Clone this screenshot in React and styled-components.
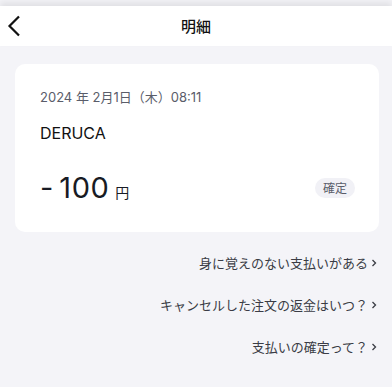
import React from 'react'
import styled, { createGlobalStyle } from 'styled-components'

const GlobalStyle = createGlobalStyle`
    html, body {
        margin: 0;
        padding: 0;
        background: #f4f4f8;
        font-family: Inter, "Noto Sans CJK JP", sans-serif;
        -webkit-font-smoothing: antialiased;
    }
`

const Page = styled.div`
    width: 392px;
    height: 387px;
    background: #f4f4f8;
    overflow: hidden;
`

const Header = styled.header`
    height: 40px;
    margin-top: 6px;
    background: #fff;
    box-shadow: 0 -4px 6px rgba(0, 0, 0, 0.08);
    display: grid;
    grid-template-columns: 60px 1fr 60px;
    align-items: center;
`

const BackButton = styled.button`
    border: none;
    background: none;
    padding: 0 0 0 7px;
    height: 100%;
    display: flex;
    align-items: center;
    cursor: pointer;
`

const Title = styled.h1`
    margin: 0 0 1px 0;
    text-align: center;
    font-size: 15px;
    font-weight: 500;
    color: #111;
    font-family: "Noto Sans CJK JP", sans-serif;
`

const Content = styled.main`
    padding: 18px 13px 0 15px;
`

const Card = styled.section`
    background: #fff;
    border-radius: 10px;
    height: 168px;
    box-sizing: border-box;
    padding: 24px 25px 0 25px;
`

const DateText = styled.div`
    font-size: 13px;
    color: #5a5d6a;
    line-height: 18px;
    font-family: Inter, "Noto Sans CJK JP", sans-serif;
`

const Merchant = styled.div`
    margin-top: 17px;
    font-size: 16px;
    color: #111;
    line-height: 20px;
`

const AmountRow = styled.div`
    margin-top: 27px;
    display: flex;
    align-items: center;
    justify-content: space-between;
`

const Amount = styled.div`
    display: flex;
    align-items: baseline;
    color: #181b24;
`

const Minus = styled.span`
    font-size: 29px;
    margin-right: 6px;
`

const Value = styled.span`
    font-size: 29px;
    font-weight: 400;
    letter-spacing: 0.5px;
`

const Yen = styled.span`
    margin-left: 6px;
    font-size: 14px;
    font-family: "Noto Sans CJK JP", sans-serif;
`

const Badge = styled.span`
    background: #f1f1f6;
    color: #5a5d6a;
    border-radius: 10px;
    font-size: 12px;
    line-height: 20px;
    padding: 0 8px;
    margin-right: -1px;
    font-family: "Noto Sans CJK JP", sans-serif;
`

const LinkList = styled.ul`
    list-style: none;
    margin: 0;
    padding: 22px 2px 0 0;
    display: flex;
    flex-direction: column;
    align-items: flex-end;
    gap: 24px;
`

const LinkItem = styled.li`
    font-size: 13px;
    line-height: 18px;
    color: #3a3c45;
    font-family: "Noto Sans CJK JP", sans-serif;
    display: flex;
    align-items: center;
    gap: 3px;
`

const Chevron = () => (
    <svg width="6" height="10" viewBox="0 0 6 10">
        <path d="M1.5 2 L4.5 5 L1.5 8" fill="none" stroke="#3a3c45" strokeWidth="1.3" />
    </svg>
)

const links = [
    '身に覚えのない支払いがある',
    'キャンセルした注文の返金はいつ？',
    '支払いの確定って？',
]

export default function App() {
    return (
        <Page>
            <GlobalStyle />
            <Header>
                <BackButton>
                    <svg width="14" height="22" viewBox="0 0 14 22">
                        <path d="M12 1.5 L2.5 11 L12 20.5" fill="none" stroke="#111" strokeWidth="2.2" />
                    </svg>
                </BackButton>
                <Title>明細</Title>
                <div />
            </Header>
            <Content>
                <Card>
                    <DateText>2024 年 2月1日（木）08:11</DateText>
                    <Merchant>DERUCA</Merchant>
                    <AmountRow>
                        <Amount>
                            <Minus>-</Minus>
                            <Value>100</Value>
                            <Yen>円</Yen>
                        </Amount>
                        <Badge>確定</Badge>
                    </AmountRow>
                </Card>
                <LinkList>
                    {links.map((text, index) => (
                        <LinkItem key={index}>
                            {text}
                            <Chevron />
                        </LinkItem>
                    ))}
                </LinkList>
            </Content>
        </Page>
    )
}
